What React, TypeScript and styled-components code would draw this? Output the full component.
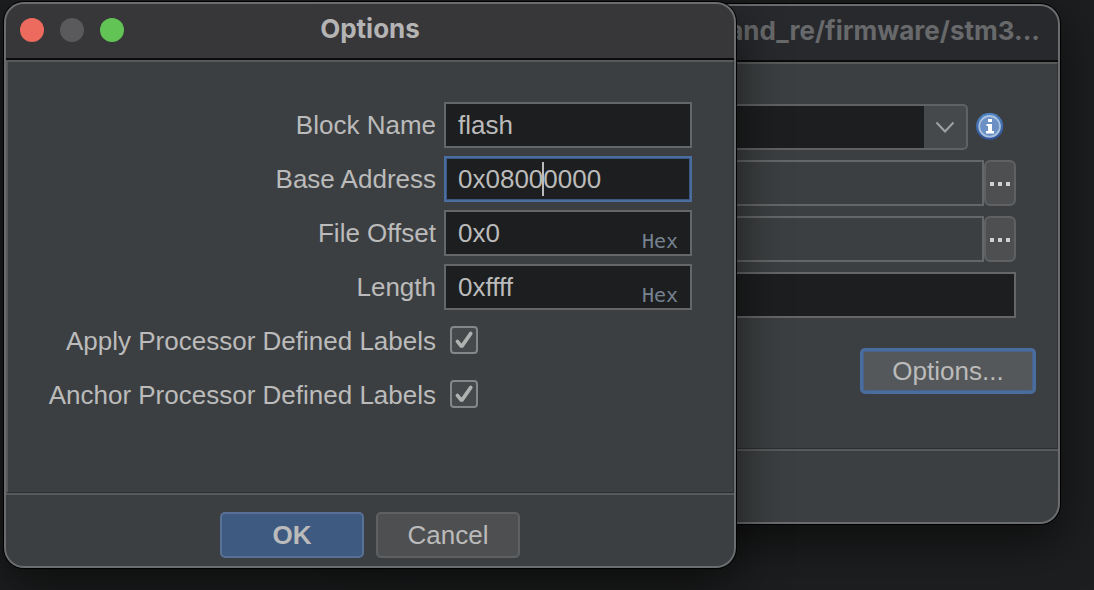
import React from "react";
import styled, { createGlobalStyle, css } from "styled-components";

const GlobalStyle = createGlobalStyle`
  *, *::before, *::after { box-sizing: border-box; }
  body {
    margin: 0;
    background: #1d1e1f;
    color: #bbbbbb;
    font: 26px/30px "Liberation Sans", Arial, sans-serif;
  }
  button, input, select { font: inherit; color: inherit; margin: 0; }
`;

const Desktop = styled.main`
  position: relative;
  min-height: 100vh;
  overflow: hidden;
`;

const windowFrame = css`
  position: absolute;
  display: flex;
  flex-direction: column;
  border-radius: 20px;
  background: #3c3f41;
  box-shadow: 0 0 0 1px #000000, 0 16px 50px rgba(0, 0, 0, 0.6);
  overflow: hidden;

  &::after {
    content: "";
    position: absolute;
    inset: 0;
    border: 2px solid #6a6c6d;
    border-radius: 20px;
    pointer-events: none;
  }
`;

const ImportWindow = styled.section`
  ${windowFrame}
  top: 4px;
  left: 360px;
  right: 34px;
`;

const OptionsDialog = styled.section`
  ${windowFrame}
  top: 2px;
  left: 4px;
  width: calc(100% - 362px);
  min-width: 640px;
`;

const TitleBar = styled.header<{ $active?: boolean }>`
  position: relative;
  display: flex;
  align-items: center;
  justify-content: ${(p) => (p.$active ? "center" : "flex-end")};
  height: 58px;
  padding: 0 20px 2px;
  border-bottom: 2px solid #0b0b0c;
  background: ${(p) => (p.$active ? "#373638" : "#28292d")};
  color: ${(p) => (p.$active ? "#b4b4b5" : "#68696b")};
`;

const Title = styled.h1`
  margin: 0;
  font: 700 26px/30px Inter, sans-serif;
  white-space: nowrap;
`;

const WindowControls = styled.div`
  position: absolute;
  left: 16px;
  top: 16px;
  display: flex;
  gap: 16px;
`;

const WindowControl = styled.button<{ $color: string }>`
  width: 24px;
  height: 24px;
  padding: 0;
  border: 0;
  border-radius: 50%;
  background: ${(p) => p.$color};
`;

const panel = css`
  margin: 0 2px;
  border-style: solid;
  border-width: 2px 1px 1px 2px;
  border-color: #58595b #303234 #2c2e30 #58595b;
`;

const OptionsForm = styled.div`
  ${panel}
  display: grid;
  grid-template-columns: 1fr 248px;
  grid-auto-rows: 46px;
  gap: 8px;
  padding: 40px 41px 74px 24px;
  align-items: center;
`;

const FieldLabel = styled.label`
  text-align: right;
  white-space: nowrap;
`;

const FieldBox = styled.div`
  position: relative;
`;

const TextInput = styled.input<{ $focused?: boolean; $readOnly?: boolean }>`
  display: block;
  width: 100%;
  min-width: 0;
  height: 46px;
  padding: 0 12px;
  border: 2px solid #646668;
  border-radius: 0;
  background: ${(p) => (p.$readOnly ? "#3c3f41" : "#1d1e1f")};
  outline: none;
  ${(p) =>
    p.$focused &&
    css`
      border-color: #4a6da0;
      box-shadow: inset 0 0 0 1px #3c5780;
    `}
`;

const Caret = styled.span`
  position: absolute;
  left: 98px;
  top: 6px;
  width: 2px;
  height: 34px;
  background: #bbbbbb;
`;

const Unit = styled.span`
  position: absolute;
  right: 14px;
  bottom: 3px;
  color: #768290;
  font: 20px/24px "DejaVu Sans Mono", monospace;
`;

const CheckWrap = styled.span`
  position: relative;
  display: flex;
  width: 28px;
  height: 28px;
  margin: 0 6px 2px;

  svg {
    position: absolute;
    inset: 0;
    pointer-events: none;
  }
`;

const CheckBox = styled.input`
  appearance: none;
  width: 28px;
  height: 28px;
  border: 2px solid #858687;
  border-radius: 4px;
  background: #46494b;
`;

const Footer = styled.footer`
  display: flex;
  justify-content: center;
  gap: 12px;
  height: 75px;
  padding: 17px 0 0;
  border-top: 2px solid #58595b;
`;

const Button = styled.button<{ $kind?: "primary" | "focused" }>`
  width: 144px;
  height: 46px;
  padding: 0;
  border: 2px solid #5f6062;
  border-radius: 5px;
  background: #4e4f51;
  ${(p) =>
    p.$kind === "primary" &&
    css`
      border-color: #587096;
      background: #3f5a80;
      font-weight: 700;
    `}
  ${(p) =>
    p.$kind === "focused" &&
    css`
      width: 176px;
      border: 3px solid #4a6da0;
      box-shadow: inset 0 0 0 1px #48648c;
      background: #55585a;
    `}
`;

const ImportForm = styled.div`
  ${panel}
  display: flex;
  flex-direction: column;
  gap: 10px;
  padding: 40px 21px 54px 24px;
`;

const ImportRow = styled.div`
  display: flex;
  align-items: center;
  padding-right: 20px;
`;

const FormatRow = styled(ImportRow)`
  gap: 8px;
  padding-right: 32px;
`;

const SelectBox = styled.div`
  position: relative;
  flex: 1;
  display: flex;

  svg {
    position: absolute;
    right: 13px;
    top: 15px;
    pointer-events: none;
  }
`;

const Select = styled.select`
  appearance: none;
  width: 100%;
  height: 46px;
  border: 2px solid #5f6163;
  border-radius: 5px;
  background: linear-gradient(#46494b, #46494b) right / 42px 100% no-repeat #1d1e1f;
`;

const BrowseButton = styled.button`
  flex: none;
  display: flex;
  align-items: center;
  justify-content: center;
  gap: 4px;
  width: 32px;
  height: 46px;
  padding: 2px 0 0;
  border: 2px solid #5f6163;
  border-radius: 6px;
  background: #4e4f51;
`;

const Dot = styled.span`
  width: 4px;
  height: 4px;
  background: #d0d0d0;
`;

const ImportActions = styled.div`
  display: flex;
  justify-content: flex-end;
  padding-top: 20px;
`;

const InfoIcon = () => (
  <svg width="28" height="28" viewBox="0 0 28 28" role="img" aria-label="Information">
    <defs>
      <linearGradient id="info-rim" x1="0" y1="0" x2="0" y2="1">
        <stop offset="0" stopColor="#4e86c6" />
        <stop offset="1" stopColor="#304f92" />
      </linearGradient>
    </defs>
    <circle cx="13.6" cy="13.4" r="13.6" fill="url(#info-rim)" />
    <circle cx="13.6" cy="13.4" r="10.4" fill="#6c90c4" stroke="#a9c1e0" strokeWidth="1.8" />
    <path d="M12 6h4v3h-4zM10.5 11H16v7h2v2.4h-8V18h2v-5h-1.5z" fill="#fff" />
  </svg>
);

const CheckMark = () => (
  <svg width="28" height="28" viewBox="0 0 28 28" aria-hidden="true">
    <path d="M7.4 15.4L11.6 20.6L20.8 7.4" fill="none" stroke="#b0b1b1" strokeWidth="3.6" strokeLinecap="round" strokeLinejoin="bevel" />
  </svg>
);

const Field = ({ id, label, value, focused, unit }: { id: string; label: string; value: string; focused?: boolean; unit?: string }) => (
  <>
    <FieldLabel htmlFor={id}>{label}</FieldLabel>
    <FieldBox>
      <TextInput id={id} type="text" defaultValue={value} $focused={focused} />
      {focused && <Caret />}
      {unit && <Unit>{unit}</Unit>}
    </FieldBox>
  </>
);

const CheckField = ({ id, label }: { id: string; label: string }) => (
  <>
    <FieldLabel htmlFor={id}>{label}</FieldLabel>
    <CheckWrap>
      <CheckBox id={id} type="checkbox" defaultChecked />
      <CheckMark />
    </CheckWrap>
  </>
);

const BrowseRow = ({ label }: { label: string }) => (
  <ImportRow>
    <TextInput type="text" aria-label={label} readOnly $readOnly />
    <BrowseButton type="button" aria-label={`Browse ${label}`}>
      <Dot />
      <Dot />
      <Dot />
    </BrowseButton>
  </ImportRow>
);

export default function App() {
  return (
    <>
      <GlobalStyle />
      <Desktop>
        <ImportWindow>
          <TitleBar>
            <Title as="h2">and_re/firmware/stm3...</Title>
          </TitleBar>
          <ImportForm>
            <FormatRow>
              <SelectBox>
                <Select aria-label="Format" />
                <svg width="20" height="16" viewBox="0 0 20 16" aria-hidden="true">
                  <path d="M1.5 3.5L10 12.5L18.5 3.5" fill="none" stroke="#a0a1a2" strokeWidth="2" />
                </svg>
              </SelectBox>
              <InfoIcon />
            </FormatRow>
            <BrowseRow label="Language" />
            <BrowseRow label="Destination Folder" />
            <ImportRow>
              <TextInput type="text" aria-label="Program Name" />
            </ImportRow>
            <ImportActions>
              <Button type="button" $kind="focused">Options...</Button>
            </ImportActions>
          </ImportForm>
          <Footer />
        </ImportWindow>

        <OptionsDialog role="dialog" aria-labelledby="options-title">
          <TitleBar $active>
            <WindowControls>
              <WindowControl type="button" aria-label="Close" $color="#ed6a5e" />
              <WindowControl type="button" aria-label="Minimize" $color="#5a595b" />
              <WindowControl type="button" aria-label="Zoom" $color="#61c454" />
            </WindowControls>
            <Title id="options-title">Options</Title>
          </TitleBar>
          <OptionsForm>
            <Field id="block-name" label="Block Name" value="flash" />
            <Field id="base-address" label="Base Address" value="0x08000000" focused />
            <Field id="file-offset" label="File Offset" value="0x0" unit="Hex" />
            <Field id="length" label="Length" value="0xffff" unit="Hex" />
            <CheckField id="apply-labels" label="Apply Processor Defined Labels" />
            <CheckField id="anchor-labels" label="Anchor Processor Defined Labels" />
          </OptionsForm>
          <Footer>
            <Button type="button" $kind="primary">OK</Button>
            <Button type="button">Cancel</Button>
          </Footer>
        </OptionsDialog>
      </Desktop>
    </>
  );
}
